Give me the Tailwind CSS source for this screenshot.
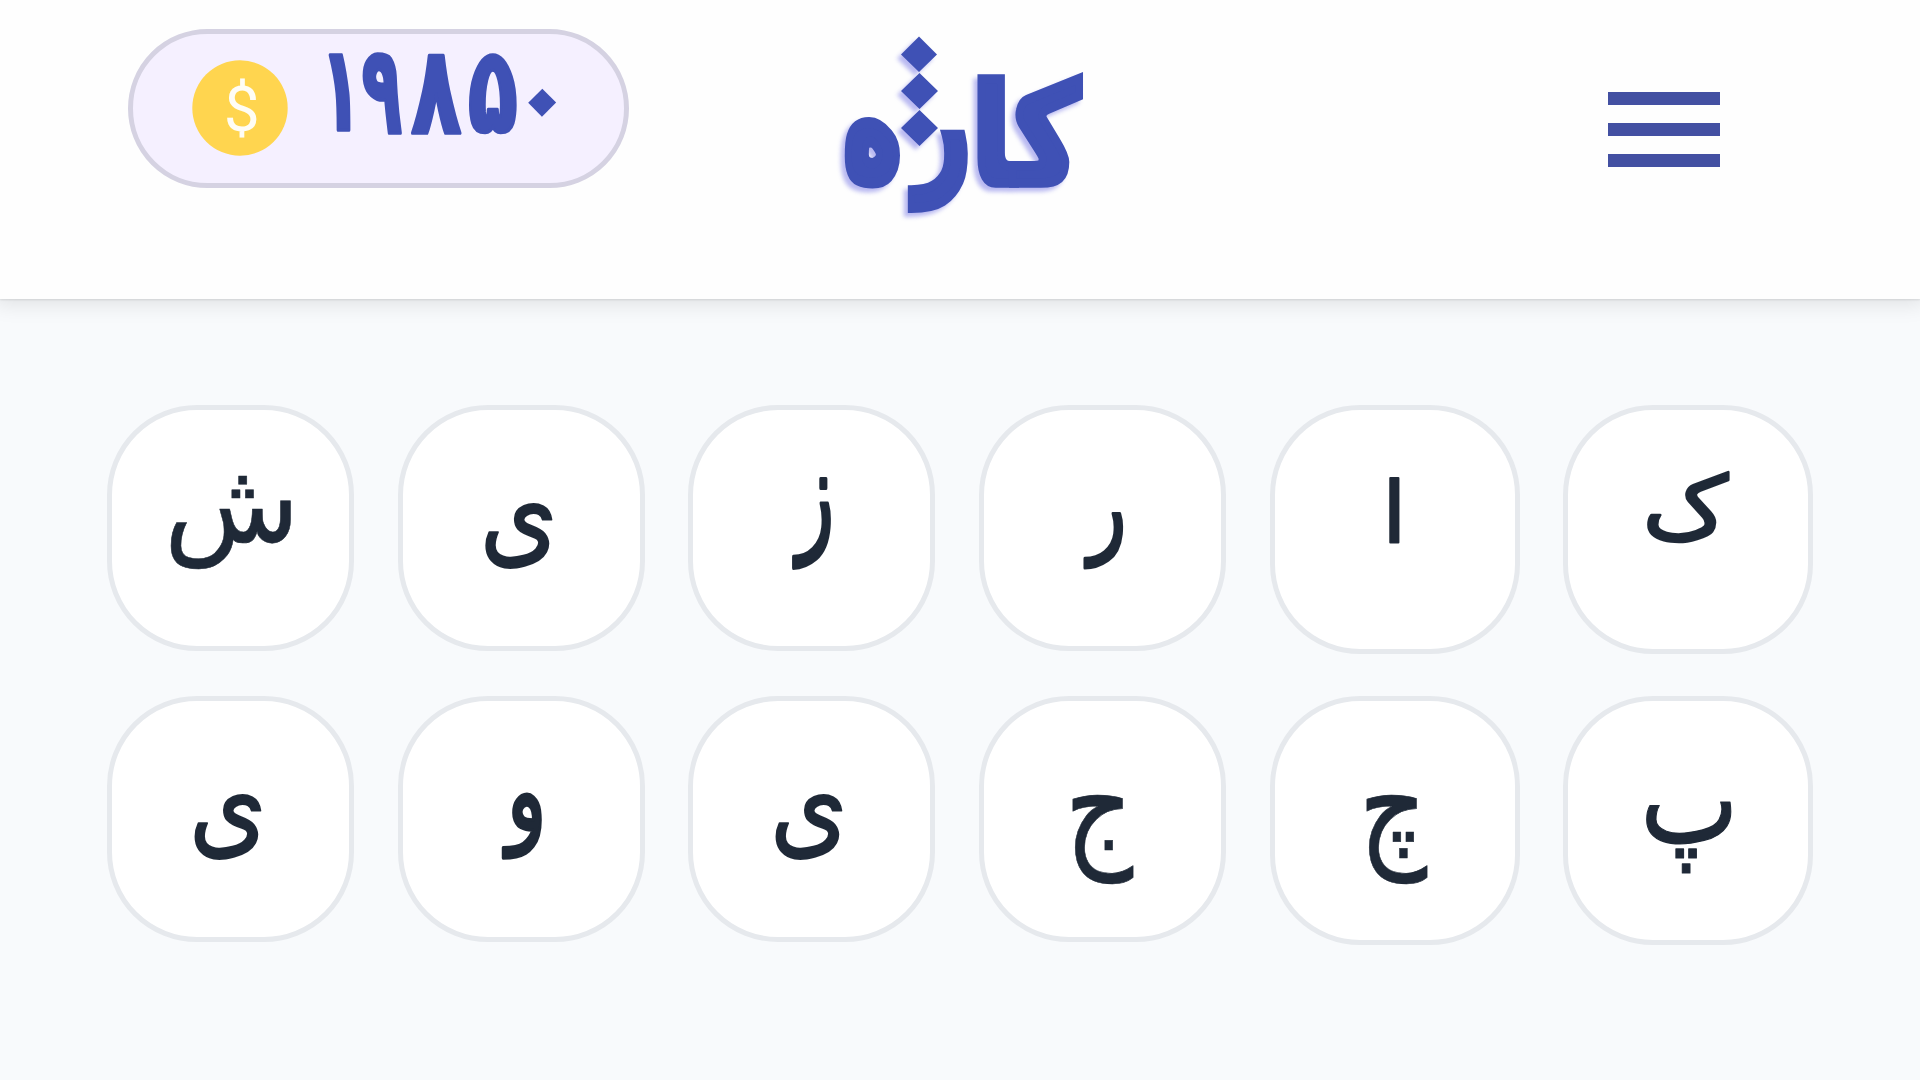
<!DOCTYPE html>
<html lang="fa">
<head>
<meta charset="utf-8">
<title>کاژه</title>
<script src="https://cdn.jsdelivr.net/npm/@tailwindcss/browser@4"></script>
</head>
<body class="h-[1080px] w-[1920px] overflow-hidden bg-[#f8fafc] font-['DejaVu_Sans',sans-serif]">
<header class="relative flex h-[299px] items-start bg-[#fefefe] pl-32 shadow-[0_1px_2px_rgba(0,0,0,0.1),0_0_20px_5px_rgba(0,0,0,0.1)]">
  <div class="mt-[29px] flex h-[159px] w-[501px] items-start rounded-full border-5 border-[#d5d2e2] bg-[#f5f0ff] pl-[59px]">
    <svg class="mt-[26px] size-24 shrink-0" viewBox="0 0 96 96">
      <circle cx="48" cy="48" r="47.7" fill="#ffd54f"/>
      <text transform="matrix(.64 0 0 .634 31.8 70.7)" font-size="100" fill="#fffdf5" class="font-['Roboto',sans-serif]">$</text>
    </svg>
    <svg class="ml-8 mt-[11px] h-24 w-[246px] shrink-0 overflow-visible font-bold" viewBox="0 0 246 96" fill="#3f51b5" stroke="#3f51b5" stroke-width="3" stroke-linejoin="round" font-size="100"><text transform="matrix(.676 0 0 1.18 0.2 85.2)">۱</text><text transform="matrix(.667 0 0 1.239 41.5 88.1)">۹</text><text transform="matrix(.827 0 0 1.224 91.1 88.2)">۸</text><text transform="matrix(.822 0 0 1.188 147.8 87)">۵</text><text stroke-width="0" transform="translate(223 57) rotate(45) scale(1.12 1.17) translate(-30.5 29)">۰</text></svg>
  </div>
  <h1 class="ml-[206px] mt-[25px]">
    <svg class="h-[200px] w-[260px] overflow-visible font-bold drop-shadow-[-4px_4px_2px_rgba(90,90,225,0.42)]" viewBox="0 0 260 200" fill="#3f51b5" stroke="#3f51b5" stroke-width="7" font-size="100">
      <clipPath id="stem"><rect x="60" y="99" width="90" height="110"/></clipPath>
      <text transform="matrix(1.12 0 0 1.373 137 158.2)">کا</text>
      <g clip-path="url(#stem)"><text transform="matrix(.968 0 0 1.426 80.2 147.8)">ژ</text></g>
      <text transform="matrix(.983 0 0 1.565 8.5 152.8)">ه</text>
      <path stroke="none" d="M84 11.500l18 18-18 17.500-18-17.500zM84.500 48l18.500 18-18.500 18-18.500-18zM84.500 85l18.500 18-18.500 18-18.500-18z"/>
    </svg>
  </h1>
  <button class="ml-[513px] mt-[92px] flex h-[75px] w-28 flex-col justify-between" aria-label="منو">
    <span class="h-[13px] w-full bg-[#4350a2]"></span>
    <span class="h-[13px] w-full bg-[#4350a2]"></span>
    <span class="h-[13px] w-full bg-[#4350a2]"></span>
  </button>
</header>
<main class="grid grid-cols-[247px_247px_247px_247px_250px_250px] grid-rows-[246px_246px] items-start gap-x-[43.7px] gap-y-[45px] pl-[107px] pt-[106px] [&_svg]:block [&_svg]:overflow-visible [&_text]:fill-[#1f2937] [&_text]:stroke-[#1f2937] [&_text]:[stroke-linejoin:round] [&_text]:text-[100px]">
  <div class="h-[246px] rounded-[90px] border-5 border-[#e6e9ed] bg-white"><svg viewBox="5 5 237 236"><text stroke-width=".5" transform="matrix(1.112 0 0 1.118 57 137.2)">ش</text></svg></div>
  <div class="h-[246px] rounded-[90px] border-5 border-[#e6e9ed] bg-white"><svg viewBox="5 5 237 236"><text stroke-width="1.500" transform="matrix(1 0 0 1.18 81.7 146.9)">ی</text></svg></div>
  <div class="h-[246px] rounded-[90px] border-5 border-[#e6e9ed] bg-white"><svg viewBox="5 5 237 236"><text stroke-width="3" transform="matrix(.786 0 0 1.26 108.6 132.2)">ز</text></svg></div>
  <div class="h-[246px] rounded-[90px] border-5 border-[#e6e9ed] bg-white"><svg viewBox="5 5 237 236"><text stroke-width="3" transform="matrix(.802 0 0 1.065 109 137)">ر</text></svg></div>
  <div class="h-[249px] rounded-[90px] border-5 border-[#e6e9ed] bg-white"><svg viewBox="5 5 240 239"><text stroke-width="2.500" transform="matrix(.887 0 0 .848 112.1 136.5)">ا</text></svg></div>
  <div class="h-[249px] rounded-[90px] border-5 border-[#e6e9ed] bg-white"><svg viewBox="5 5 240 239"><text stroke-width="3" transform="matrix(.957 0 0 .868 79.6 133.4)">ک</text></svg></div>
  <div class="h-[246px] rounded-[90px] border-5 border-[#e6e9ed] bg-white"><svg viewBox="5 5 237 236"><text stroke-width="1.500" transform="matrix(.995 0 0 1.18 82.1 146.9)">ی</text></svg></div>
  <div class="h-[246px] rounded-[90px] border-5 border-[#e6e9ed] bg-white"><svg viewBox="5 5 237 236"><text stroke-width="3" transform="matrix(.838 0 0 1.14 108.5 134.4)">و</text></svg></div>
  <div class="h-[246px] rounded-[90px] border-5 border-[#e6e9ed] bg-white"><svg viewBox="5 5 237 236"><text stroke-width="1.500" transform="matrix(.995 0 0 1.18 82.1 146.9)">ی</text></svg></div>
  <div class="h-[246px] rounded-[90px] border-5 border-[#e6e9ed] bg-white"><svg viewBox="5 5 237 236"><text stroke-width=".5" transform="matrix(1.06 0 0 1.33 85.8 155.5)">ج</text></svg></div>
  <div class="h-[249px] rounded-[90px] border-5 border-[#e6e9ed] bg-white"><svg viewBox="5 5 240 239"><text stroke-width=".5" transform="matrix(1.06 0 0 1.33 88.8 155.5)">چ</text></svg></div>
  <div class="h-[249px] rounded-[90px] border-5 border-[#e6e9ed] bg-white"><svg viewBox="5 5 240 239"><text stroke-width="1" transform="matrix(1.05 0 0 1.24 77 146.5)">پ</text></svg></div>
</main>
</body>
</html>
